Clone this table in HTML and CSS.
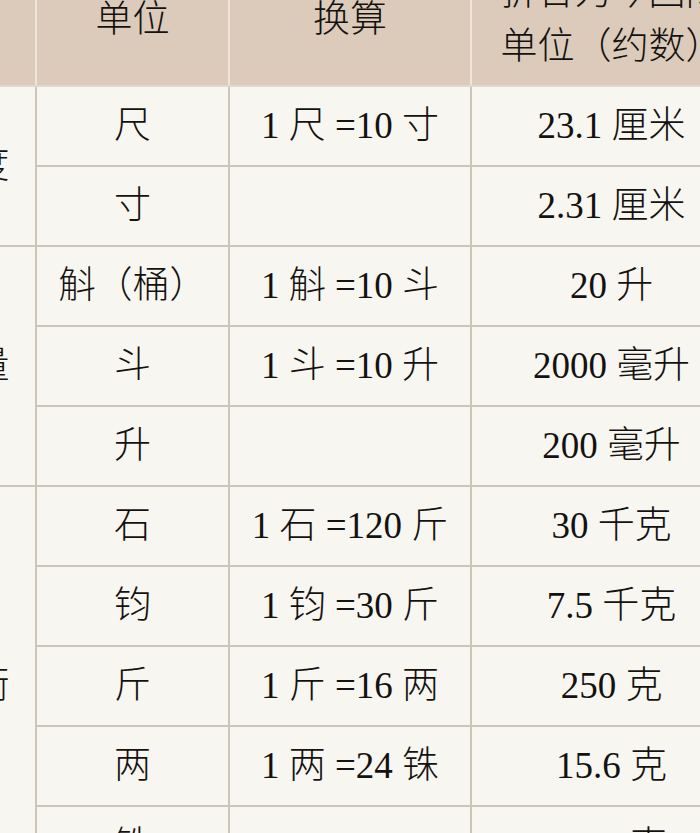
FILE: index.html
```html
<!DOCTYPE html>
<html lang="zh">
<head>
<meta charset="utf-8">
<link rel="stylesheet" href="styles.css">
</head>
<body>
<div class="frame">
<table class="units">
  <colgroup>
    <col class="c1"><col class="c2"><col class="c3"><col class="c4">
  </colgroup>
  <thead>
    <tr>
      <th></th>
      <th>单位</th>
      <th>换算</th>
      <th>折合为今国际<br>单位（约数）</th>
    </tr>
  </thead>
  <tbody>
    <tr><td class="grp" rowspan="2">度</td><td>尺</td><td>1 尺 =10 寸</td><td>23.1 厘米</td></tr>
    <tr><td>寸</td><td></td><td>2.31 厘米</td></tr>
    <tr><td class="grp" rowspan="3">量</td><td>斛（桶）</td><td>1 斛 =10 斗</td><td>20 升</td></tr>
    <tr><td>斗</td><td>1 斗 =10 升</td><td>2000 毫升</td></tr>
    <tr><td>升</td><td></td><td>200 毫升</td></tr>
    <tr><td class="grp" rowspan="5">衡</td><td>石</td><td>1 石 =120 斤</td><td>30 千克</td></tr>
    <tr><td>钧</td><td>1 钧 =30 斤</td><td>7.5 千克</td></tr>
    <tr><td>斤</td><td>1 斤 =16 两</td><td>250 克</td></tr>
    <tr><td>两</td><td>1 两 =24 铢</td><td>15.6 克</td></tr>
    <tr><td>铢</td><td></td><td>0.65 克</td></tr>
  </tbody>
</table>
</div>
</body>
</html>
```

FILE: styles.css
```css
html, body {
  margin: 0;
  padding: 0;
  background: #f8f6f1;
  overflow: hidden;
}
.frame {
  margin-left: -55px;
  margin-top: -45px;
}
.units {
  border-collapse: collapse;
  table-layout: fixed;
  width: 806px;
  font-family: "Liberation Serif", "Noto Sans CJK SC", serif;
  font-size: 37px;
  font-weight: 300;
  color: #141210;
}
.c1 { width: 90px; }
.c2 { width: 193px; }
.c3 { width: 242px; }
.c4 { width: 281px; }
.units th {
  height: 130px;
  padding: 0;
  background: #dccbbb;
  font-weight: 300;
  line-height: 54px;
  text-align: center;
  vertical-align: middle;
  white-space: nowrap;
  border-left: 2px solid #efe5d8;
  border-right: 2px solid #efe5d8;
  border-bottom: 2px solid #e4d8ca;
}
.units td {
  height: 78px;
  padding: 0;
  text-align: center;
  vertical-align: middle;
  line-height: 40px;
  white-space: nowrap;
  border: 2px solid #cdc5b8;
  background: #f8f6f1;
}
.units td.grp {
  background: #f8f6f1;
}
```
